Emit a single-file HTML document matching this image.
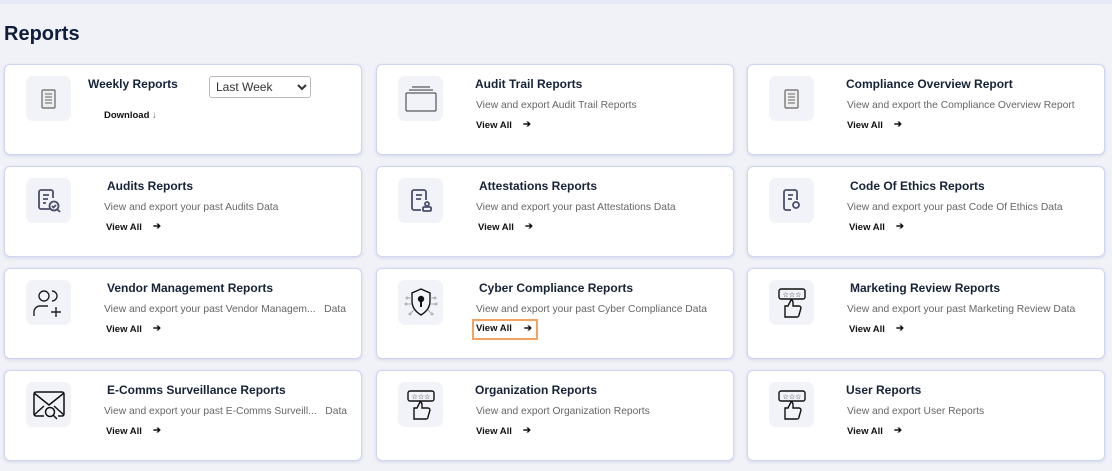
<!DOCTYPE html>
<html><head><meta charset="utf-8"><style>
*{box-sizing:border-box;margin:0;padding:0}
body{width:1112px;height:471px;overflow:hidden;background:#f1f2f8;font-family:"Liberation Sans",Arial,sans-serif;position:relative}
.top{position:absolute;left:0;top:0;width:1112px;height:4px;background:#e6e9f6}
h1{position:absolute;left:4px;top:23px;font-size:20px;font-weight:bold;color:#0f1d3a}
.card{position:absolute;width:358px;height:91px;background:#fff;border:1px solid #cdd5f3;border-radius:6px;box-shadow:0 1px 3px rgba(120,130,180,.25)}
.ic{position:absolute;left:21px;top:11px;width:45px;height:45px;background:#f2f3f8;border-radius:7px;display:flex;align-items:center;justify-content:center}
.t{position:absolute;left:102px;top:12px;font-size:12px;font-weight:bold;color:#152238;white-space:nowrap}
.d{position:absolute;left:99px;top:35px;font-size:10.3px;color:#666;white-space:nowrap}
.v{position:absolute;left:99px;top:54px;font-size:9.5px;font-weight:bold;color:#111;padding:1px 2px;width:64px;white-space:nowrap}
.v span{position:absolute;left:49px;top:0}
.hl{outline:2px solid #f4a261}
select{position:absolute;left:204px;top:11px;width:102px;height:22px;font-size:12px;font-family:"Liberation Sans",Arial;border:1px solid #bbb;border-radius:3px;background:#fff;color:#333;padding-left:2px}
</style></head><body>
<div class="top"></div>
<h1>Reports</h1>

<div class="card" style="left:4px;top:64px">
 <div class="ic"><svg width="18" height="22" viewBox="0 0 18 22"><rect x="2" y="2" width="13" height="18" rx="1" fill="#eee" stroke="#666" stroke-width="1.2"/><path d="M5 6h7M5 9h7M5 12h7M5 15h7" stroke="#666"/></svg></div>
 <div class="t" style="left:83px">Weekly Reports</div>
 <select><option>Last Week</option></select>
 <div style="position:absolute;left:99px;top:45px;font-size:9.5px;font-weight:bold;color:#111">Download <span style="font-weight:normal;color:#667">↓</span></div>
</div>
<div class="card" style="left:376px;top:64px">
 <div class="ic"><svg width="34" height="26" viewBox="0 0 34 26"><path d="M8 1h18M5 4h24" stroke="#333"/><rect x="2" y="7" width="30" height="18" rx="1" fill="none" stroke="#333"/></svg></div>
 <div class="t" style="left:98px">Audit Trail Reports</div>
 <div class="d">View and export Audit Trail Reports</div>
 <div class="v" style="left:97px">View All<span>➔</span></div>
</div>
<div class="card" style="left:747px;top:64px">
 <div class="ic"><svg width="18" height="22" viewBox="0 0 18 22"><rect x="2" y="2" width="13" height="18" rx="1" fill="#eee" stroke="#666" stroke-width="1.2"/><path d="M5 6h7M5 9h7M5 12h7M5 15h7" stroke="#666"/></svg></div>
 <div class="t" style="left:98px">Compliance Overview Report</div>
 <div class="d">View and export the Compliance Overview Report</div>
 <div class="v" style="left:97px">View All<span>➔</span></div>
</div>

<div class="card" style="left:4px;top:166px">
 <div class="ic"><svg width="26" height="26" viewBox="0 0 26 26" fill="none" stroke="#4a4e6a" stroke-width="1.8"><path d="M14 21H5a2 2 0 0 1-2-2V4a2 2 0 0 1 2-2h10a2 2 0 0 1 2 2v6"/><path d="M7 7h6M7 11h5M7 15h3"/><circle cx="18" cy="18" r="4.5"/><path d="M16 18l1.5 1.5 2.5-2.5M21.5 21.5l2.5 2.5"/></svg></div>
 <div class="t">Audits Reports</div>
 <div class="d">View and export your past Audits Data</div>
 <div class="v">View All<span>➔</span></div>
</div>
<div class="card" style="left:376px;top:166px">
 <div class="ic"><svg width="24" height="26" viewBox="0 0 24 26" fill="none" stroke="#4a4e6a" stroke-width="1.8"><path d="M12 22H5a2 2 0 0 1-2-2V4a2 2 0 0 1 2-2h10a2 2 0 0 1 2 2v8"/><path d="M7 7h6M7 11h5"/><circle cx="18" cy="16" r="2"/><rect x="14" y="19" width="8" height="4" rx="1"/></svg></div>
 <div class="t">Attestations Reports</div>
 <div class="d">View and export your past Attestations Data</div>
 <div class="v">View All<span>➔</span></div>
</div>
<div class="card" style="left:747px;top:166px">
 <div class="ic"><svg width="24" height="26" viewBox="0 0 24 26" fill="none" stroke="#4a4e6a" stroke-width="1.8"><path d="M11 22H6a2 2 0 0 1-2-2V4a2 2 0 0 1 2-2h9a2 2 0 0 1 2 2v8"/><path d="M8 7h5M8 11h4"/><circle cx="16" cy="17" r="3"/></svg></div>
 <div class="t">Code Of Ethics Reports</div>
 <div class="d">View and export your past Code Of Ethics Data</div>
 <div class="v">View All<span>➔</span></div>
</div>

<div class="card" style="left:4px;top:268px">
 <div class="ic"><svg width="34" height="30" viewBox="0 0 34 30" fill="none" stroke="#222" stroke-width="1.4"><circle cx="12" cy="8" r="5"/><path d="M20 3a5 5 0 0 1 0 10"/><path d="M2 28v-4a6 6 0 0 1 6-6h8"/><path d="M24 19v10M19 24h10"/></svg></div>
 <div class="t">Vendor Management Reports</div>
 <div class="d">View and export your past Vendor Managem...&nbsp;&nbsp;&nbsp;Data</div>
 <div class="v">View All<span>➔</span></div>
</div>
<div class="card" style="left:376px;top:268px">
 <div class="ic"><svg width="34" height="34" viewBox="0 0 34 34" fill="none" stroke="#111" stroke-width="1.4"><path d="M17 3l9 4v8c0 7-4 11-9 14-5-3-9-7-9-14V7z"/><circle cx="17" cy="13" r="2.5" fill="#111"/><path d="M17 15v6" stroke-width="2"/><g stroke="#999" stroke-width=".8"><path d="M8 12H4M8 18H3M26 12h4M26 18h5M10 24l-3 3M24 24l3 3"/><circle cx="3" cy="12" r="1"/><circle cx="2" cy="18" r="1"/><circle cx="31" cy="12" r="1"/><circle cx="32" cy="18" r="1"/><circle cx="6" cy="28" r="1"/><circle cx="28" cy="28" r="1"/></g></svg></div>
 <div class="t">Cyber Compliance Reports</div>
 <div class="d">View and export your past Cyber Compliance Data</div>
 <div class="v hl" style="top:52px;padding:2px 2px;height:17px;width:62px;left:97px">View All<span style="left:50px;top:2px">➔</span></div>
</div>
<div class="card" style="left:747px;top:268px">
 <div class="ic"><svg width="30" height="32" viewBox="0 0 30 32" fill="none" stroke="#111" stroke-width="1.4"><rect x="2" y="2" width="26" height="10" rx="2"/><text x="15" y="10" font-size="7" text-anchor="middle" fill="#111" stroke="none">☆☆☆</text><path d="M8 30V19h3l3-6c2 0 2 2 2 3v3h6a2 2 0 0 1 2 2l-2 7a2 2 0 0 1-2 2z"/></svg></div>
 <div class="t">Marketing Review Reports</div>
 <div class="d">View and export your past Marketing Review Data</div>
 <div class="v">View All<span>➔</span></div>
</div>

<div class="card" style="left:4px;top:370px">
 <div class="ic"><svg width="34" height="30" viewBox="0 0 34 30" fill="none" stroke="#111" stroke-width="1.5"><path d="M12 26H4a2 2 0 0 1-2-2V4a2 2 0 0 1 2-2h26a2 2 0 0 1 2 2v20a2 2 0 0 1-2 2h-4"/><path d="M2 3l15 12L32 3M2 25l10-9M32 25l-10-9"/><circle cx="18" cy="22" r="4.5"/><path d="M21 25l4 4"/></svg></div>
 <div class="t">E-Comms Surveillance Reports</div>
 <div class="d">View and export your past E-Comms Surveill...&nbsp;&nbsp;&nbsp;Data</div>
 <div class="v">View All<span>➔</span></div>
</div>
<div class="card" style="left:376px;top:370px">
 <div class="ic"><svg width="30" height="32" viewBox="0 0 30 32" fill="none" stroke="#111" stroke-width="1.4"><rect x="2" y="2" width="26" height="10" rx="2"/><text x="15" y="10" font-size="7" text-anchor="middle" fill="#111" stroke="none">☆☆☆</text><path d="M8 30V19h3l3-6c2 0 2 2 2 3v3h6a2 2 0 0 1 2 2l-2 7a2 2 0 0 1-2 2z"/></svg></div>
 <div class="t" style="left:98px">Organization Reports</div>
 <div class="d">View and export Organization Reports</div>
 <div class="v" style="left:97px">View All<span>➔</span></div>
</div>
<div class="card" style="left:747px;top:370px">
 <div class="ic"><svg width="30" height="32" viewBox="0 0 30 32" fill="none" stroke="#111" stroke-width="1.4"><rect x="2" y="2" width="26" height="10" rx="2"/><text x="15" y="10" font-size="7" text-anchor="middle" fill="#111" stroke="none">☆☆☆</text><path d="M8 30V19h3l3-6c2 0 2 2 2 3v3h6a2 2 0 0 1 2 2l-2 7a2 2 0 0 1-2 2z"/></svg></div>
 <div class="t" style="left:98px">User Reports</div>
 <div class="d">View and export User Reports</div>
 <div class="v" style="left:97px">View All<span>➔</span></div>
</div>
</body></html>
